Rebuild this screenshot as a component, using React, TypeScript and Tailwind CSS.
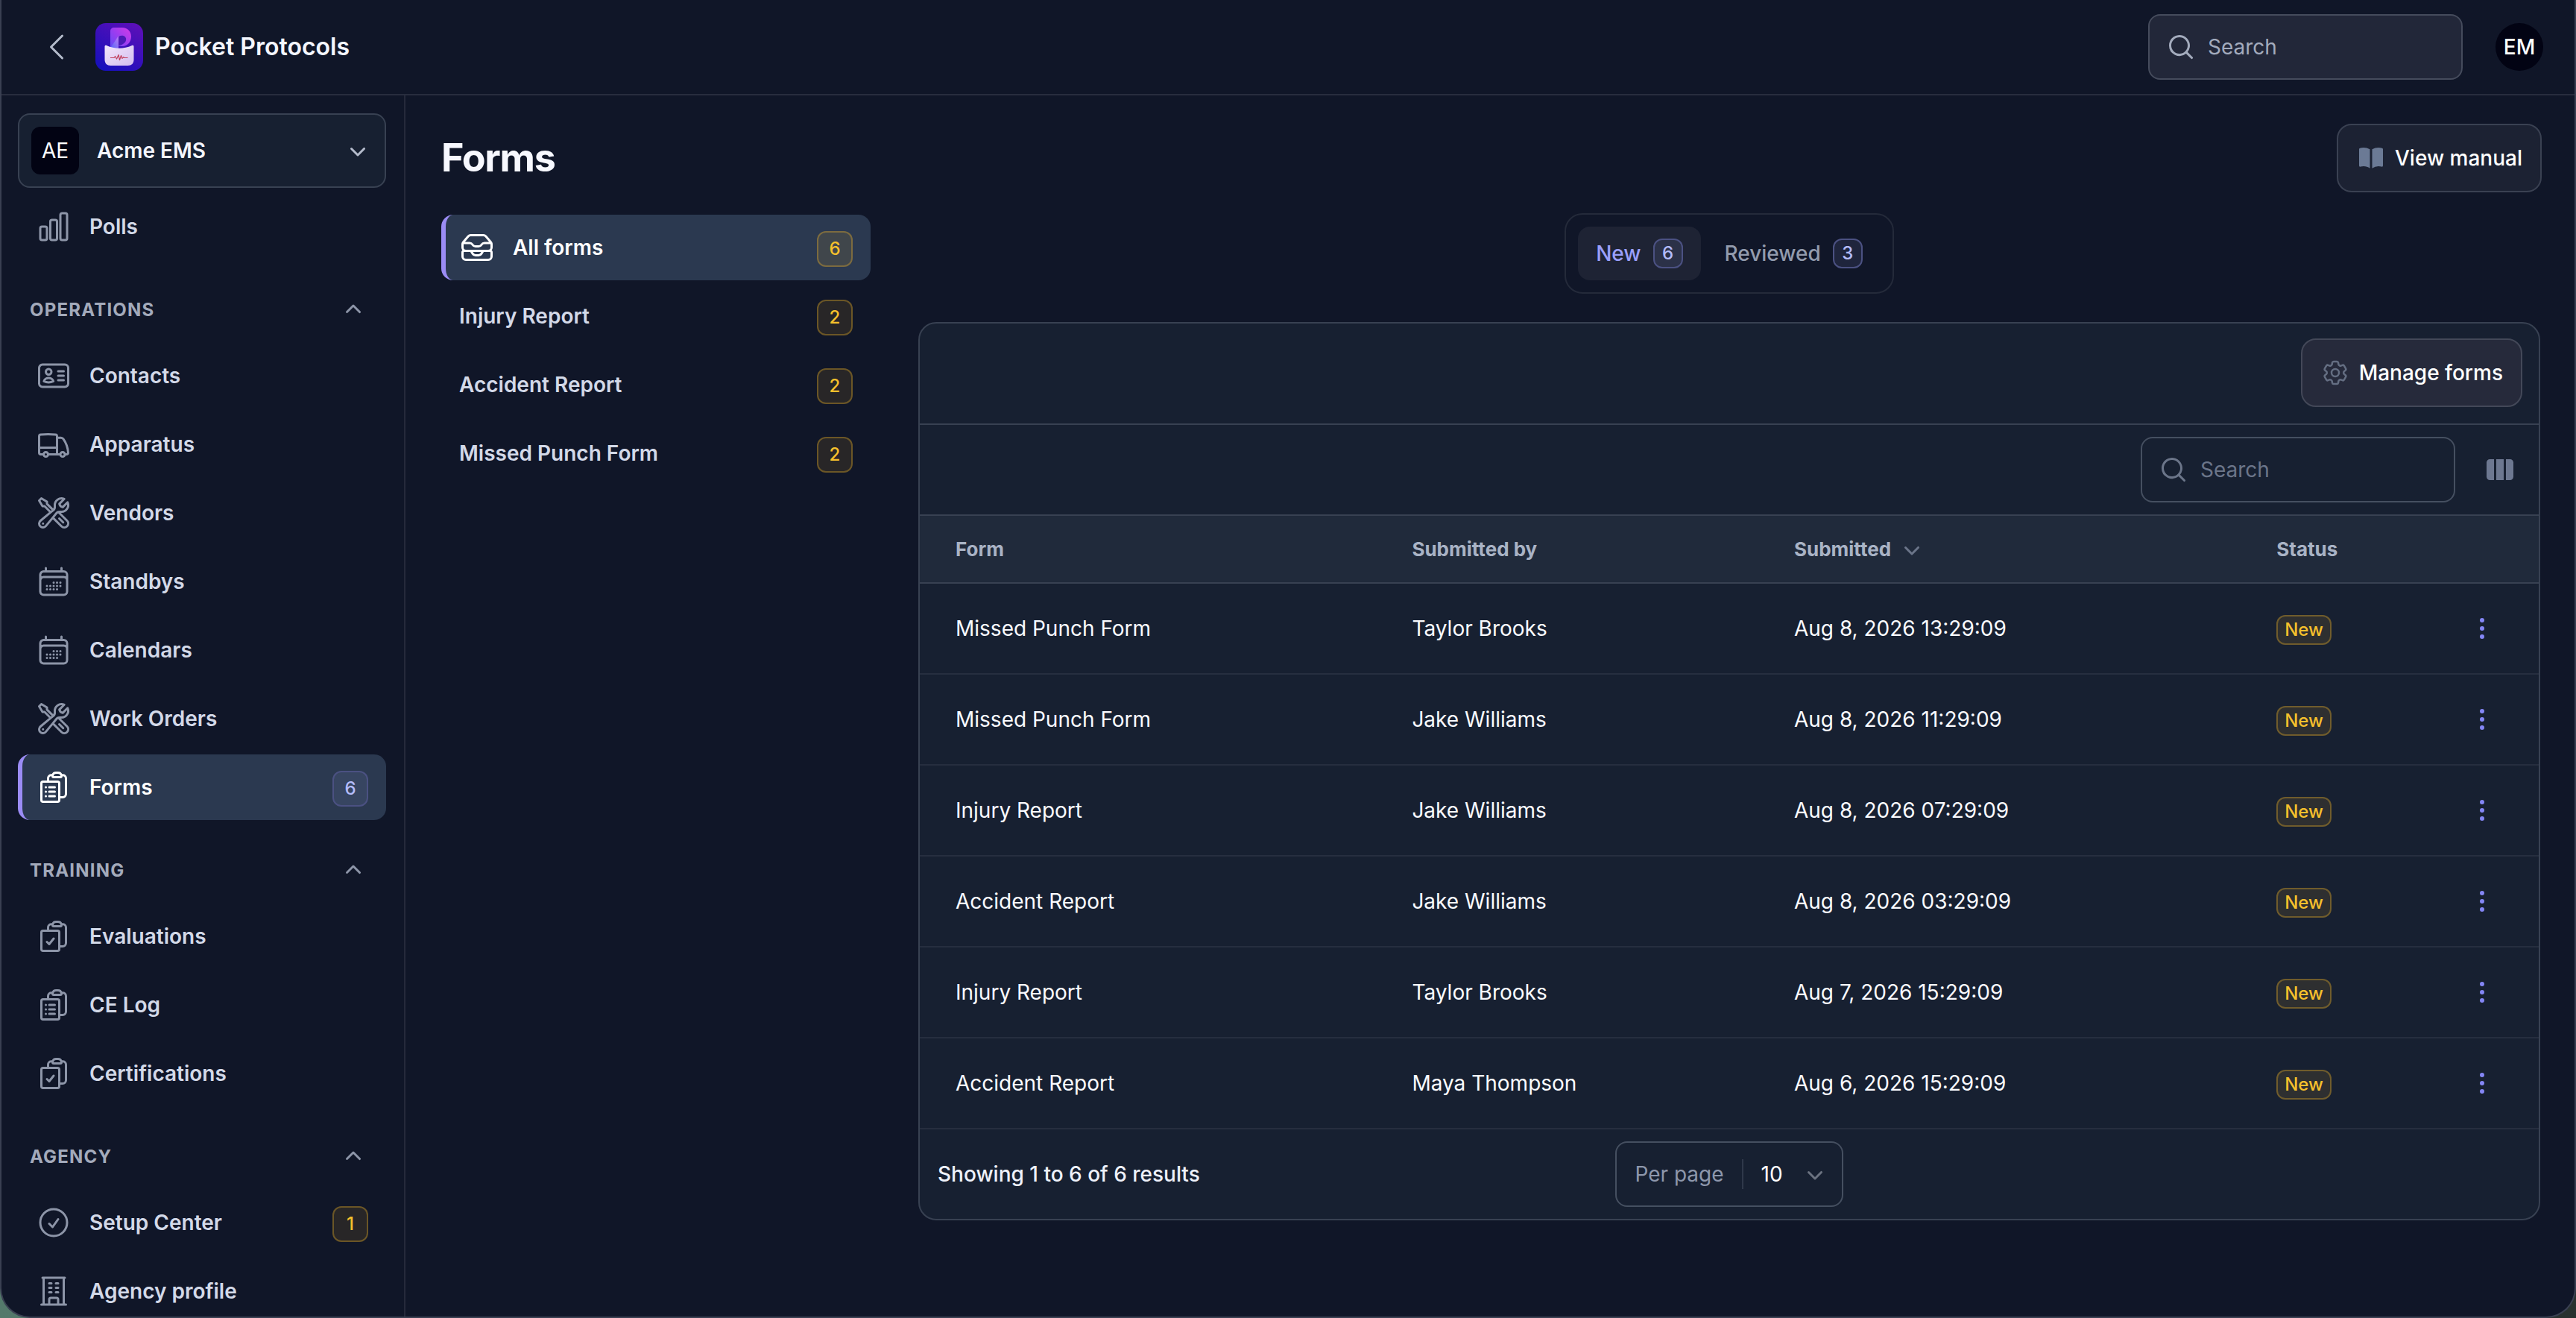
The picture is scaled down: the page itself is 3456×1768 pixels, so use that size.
import React, { useState } from "react";
import type { IconType } from "react-icons";
import {
  HiMiniBookOpen,
  HiMiniChevronDown,
  HiMiniChevronUp,
  HiMiniEllipsisVertical,
  HiMiniMagnifyingGlass,
  HiMiniViewColumns,
  HiOutlineBuildingOffice,
  HiOutlineCalendarDays,
  HiOutlineChartBar,
  HiOutlineCheckCircle,
  HiOutlineChevronLeft,
  HiOutlineClipboardDocumentCheck,
  HiOutlineClipboardDocumentList,
  HiOutlineCog6Tooth,
  HiOutlineIdentification,
  HiOutlineInboxStack,
  HiOutlineTruck,
  HiOutlineWrenchScrewdriver,
} from "react-icons/hi2";

type NavEntry = {
  label: string;
  icon: IconType;
  badge?: number;
  badgeTone?: "primary" | "warning";
  active?: boolean;
};

const navGroups: { title: string; items: NavEntry[] }[] = [
  {
    title: "OPERATIONS",
    items: [
      { label: "Contacts", icon: HiOutlineIdentification },
      { label: "Apparatus", icon: HiOutlineTruck },
      { label: "Vendors", icon: HiOutlineWrenchScrewdriver },
      { label: "Standbys", icon: HiOutlineCalendarDays },
      { label: "Calendars", icon: HiOutlineCalendarDays },
      { label: "Work Orders", icon: HiOutlineWrenchScrewdriver },
      {
        label: "Forms",
        icon: HiOutlineClipboardDocumentList,
        badge: 6,
        badgeTone: "primary",
        active: true,
      },
    ],
  },
  {
    title: "TRAINING",
    items: [
      { label: "Evaluations", icon: HiOutlineClipboardDocumentCheck },
      { label: "CE Log", icon: HiOutlineClipboardDocumentList },
      { label: "Certifications", icon: HiOutlineClipboardDocumentCheck },
    ],
  },
  {
    title: "AGENCY",
    items: [
      {
        label: "Setup Center",
        icon: HiOutlineCheckCircle,
        badge: 1,
        badgeTone: "warning",
      },
      { label: "Agency profile", icon: HiOutlineBuildingOffice },
    ],
  },
];

const formFilters = [
  { label: "All forms", count: 6, icon: HiOutlineInboxStack },
  { label: "Injury Report", count: 2 },
  { label: "Accident Report", count: 2 },
  { label: "Missed Punch Form", count: 2 },
];

const submissions = [
  { form: "Missed Punch Form", by: "Taylor Brooks", at: "Aug 8, 2026 13:29:09" },
  { form: "Missed Punch Form", by: "Jake Williams", at: "Aug 8, 2026 11:29:09" },
  { form: "Injury Report", by: "Jake Williams", at: "Aug 8, 2026 07:29:09" },
  { form: "Accident Report", by: "Jake Williams", at: "Aug 8, 2026 03:29:09" },
  { form: "Injury Report", by: "Taylor Brooks", at: "Aug 7, 2026 15:29:09" },
  { form: "Accident Report", by: "Maya Thompson", at: "Aug 6, 2026 15:29:09" },
];

const badgeTones = {
  primary: "border-[#4b5182] bg-[#a5b4fc]/10 text-[#b4bcfb]",
  warning: "border-[#fbbf24]/32 bg-[#fbbf24]/10 text-[#f5c02c]",
};

const CountBadge = ({
  tone,
  children,
}: {
  tone: "primary" | "warning";
  children: React.ReactNode;
}) => (
  <span
    className={`mt-1 flex size-12 shrink-0 items-center justify-center rounded-xl border-2 text-2xl font-medium ${badgeTones[tone]}`}
  >
    {children}
  </span>
);

const Logo = () => (
  <svg className="size-16 shrink-0" viewBox="0 0 64 64" aria-hidden="true">
    <defs>
      <linearGradient id="logoBg" x1="0.8" y1="0" x2="0.2" y2="1">
        <stop offset="0" stopColor="#5b0fb8" />
        <stop offset="1" stopColor="#1710bc" />
      </linearGradient>
      <linearGradient id="logoBowl" x1="1" y1="0" x2="0" y2="1">
        <stop offset="0" stopColor="#d43be6" />
        <stop offset="0.5" stopColor="#9a3df0" />
        <stop offset="1" stopColor="#5b4df5" />
      </linearGradient>
      <linearGradient id="logoStem" x1="0" y1="1" x2="1" y2="0">
        <stop offset="0" stopColor="#4a63f7" />
        <stop offset="1" stopColor="#c07bf5" />
      </linearGradient>
      <linearGradient id="logoPocket" x1="0" y1="0" x2="1" y2="1">
        <stop offset="0" stopColor="#f3e6fb" />
        <stop offset="1" stopColor="#d3bdee" />
      </linearGradient>
    </defs>
    <rect width="64" height="64" rx="14" fill="url(#logoBg)" />
    <path
      d="M20 11c0-3 2-5 5-5h11c7 0 12 5 12 12s-5 13-12 13h-6v5H20z"
      fill="url(#logoBowl)"
    />
    <path d="M31 18c6-3 11 0 10 5-1 4-5 6-11 8z" fill="#4a1bb5" />
    <path d="M31 17v18H19z" fill="url(#logoStem)" />
    <path
      d="M12.500 31.500c0-1.500 1-2 2.500-1.500 11 5 23 5 34 0 1.500-.5 2.500 0 2.500 1.500V49c0 5-3 8-8 8h-23c-5 0-8-3-8-8z"
      fill="url(#logoPocket)"
    />
    <path
      d="M20 46.500h5l1.500-2 2 3.500 1-2 1.500-3.500 1.500 7 2-6 1.500 4 1.500-2 1 1h5"
      fill="none"
      stroke="#c2405c"
      strokeWidth="1.200"
      strokeLinejoin="round"
    />
  </svg>
);

const SearchBox = ({ id, filled }: { id: string; filled?: boolean }) => (
  <label
    htmlFor={id}
    className={`flex h-22 w-[422px] items-center gap-4 rounded-2xl border-2 px-[22px] ${
      filled
        ? "border-[#454b5c] bg-[#222739] text-[#a3abbd]"
        : "border-[#454f60] text-[#6b7589]"
    }`}
  >
    <HiMiniMagnifyingGlass className="size-10 shrink-0" />
    <input
      id={id}
      type="search"
      aria-label="Search"
      placeholder="Search"
      className={`w-full min-w-0 bg-transparent text-[28px] leading-10 outline-none ${
        filled ? "placeholder:text-[#a3abbd]" : "placeholder:text-[#6b7589]"
      }`}
    />
  </label>
);

const NavItem = ({ item }: { item: NavEntry }) => {
  const Icon = item.icon;
  return (
    <li>
      <a
        href="#"
        aria-current={item.active ? "page" : undefined}
        className={`flex h-22 items-center gap-6 rounded-2xl border-l-6 pr-6 pl-[18px] text-[28px] font-semibold ${
          item.active
            ? "border-[#9b8cf5] bg-[#2b3950] text-white"
            : "border-transparent text-[#d3d9e8]"
        }`}
      >
        <Icon
          className={`size-12 shrink-0 ${
            item.active ? "text-white" : "text-[#8d95a8]"
          }`}
        />
        <span className="flex-1">{item.label}</span>
        {item.badge && (
          <CountBadge tone={item.badgeTone ?? "primary"}>{item.badge}</CountBadge>
        )}
      </a>
    </li>
  );
};

const Header = () => (
  <header className="flex h-32 shrink-0 items-center border-b-2 border-[#282d3e] pr-[42px] pl-[50px]">
    <button type="button" aria-label="Back" className="text-[#b4bbcb]">
      <HiOutlineChevronLeft className="size-12" />
    </button>
    <a href="#" className="ml-7 flex items-center gap-4">
      <Logo />
      <span className="text-[32px] font-semibold text-[#f4f6ff]">
        Pocket Protocols
      </span>
    </a>
    <div className="ml-auto flex items-center gap-11">
      <SearchBox id="global-search" filled />
      <button
        type="button"
        className="flex size-16 items-center justify-center rounded-full bg-[#020313] text-[28px] font-medium text-white"
      >
        EM
      </button>
    </div>
  </header>
);

const Sidebar = () => (
  <aside className="w-[542px] shrink-0 overflow-hidden border-r-2 border-[#252a3b] pt-6 pr-6 pl-[22px]">
    <button
      type="button"
      className="flex h-25 w-full items-center rounded-2xl border-2 border-[#384152] bg-[#172031] px-4 text-left"
    >
      <span className="flex size-16 items-center justify-center rounded-xl bg-[#020313] text-[28px] text-white">
        AE
      </span>
      <span className="ml-6 flex-1 text-[28px] font-semibold text-[#f4f6ff]">
        Acme EMS
      </span>
      <HiMiniChevronDown className="size-10 text-[#b4bbcb]" />
    </button>
    <nav>
      <ul className="mt-2">
        <NavItem item={{ label: "Polls", icon: HiOutlineChartBar }} />
      </ul>
      {navGroups.map((group) => (
        <section key={group.title}>
          <button
            type="button"
            className="mt-12 mb-6 flex h-10 w-full items-center justify-between pr-6 pl-4 text-2xl font-bold tracking-wider text-[#a3aabb]"
          >
            {group.title}
            <HiMiniChevronUp className="size-10 text-[#8d95a8]" />
          </button>
          <ul className="flex flex-col gap-1">
            {group.items.map((item) => (
              <NavItem key={item.label} item={item} />
            ))}
          </ul>
        </section>
      ))}
    </nav>
  </aside>
);

const FormFilterList = () => (
  <ul className="flex w-[576px] shrink-0 flex-col gap-1">
    {formFilters.map(({ label, count, icon: Icon }, index) => (
      <li key={label}>
        <a
          href="#"
          className={`flex h-22 items-center gap-6 rounded-2xl border-l-6 pr-6 pl-[18px] text-[28px] font-semibold ${
            index === 0
              ? "border-[#9b8cf5] bg-[#2b3950] text-white"
              : "border-transparent text-[#d3d9e8]"
          }`}
        >
          {Icon && <Icon className="size-12 shrink-0" />}
          <span className="flex-1">{label}</span>
          <CountBadge tone="warning">{count}</CountBadge>
        </a>
      </li>
    ))}
  </ul>
);

const StatusTabs = () => {
  const [selected, setSelected] = useState("New");
  const tabs = [
    { label: "New", count: 6 },
    { label: "Reviewed", count: 3 },
  ];
  return (
    <div
      role="tablist"
      className="flex gap-2 self-center rounded-3xl border-2 border-[#242a3a] p-4"
    >
      {tabs.map((tab) => (
        <button
          key={tab.label}
          type="button"
          role="tab"
          aria-selected={selected === tab.label}
          onClick={() => setSelected(tab.label)}
          className={`flex h-18 items-center gap-4 rounded-2xl px-6 text-[28px] font-medium ${
            selected === tab.label
              ? "bg-[#1e2334] text-[#9a9ffb]"
              : "text-[#929bad]"
          }`}
        >
          {tab.label}
          <span
            className={`flex size-10 items-center justify-center rounded-xl border-2 text-2xl ${badgeTones.primary}`}
          >
            {tab.count}
          </span>
        </button>
      ))}
    </div>
  );
};

const SubmissionsTable = () => (
  <table className="w-full table-fixed text-left text-[28px] text-[#fafbff]">
    <colgroup>
      <col className="w-[29.3%]" />
      <col className="w-[23.6%]" />
      <col className="w-[29.8%]" />
      <col />
      <col className="w-[124px]" />
    </colgroup>
    <thead>
      <tr className="h-[90px] border-b-2 border-[#384152] bg-[#202a3b] text-[26px] text-[#a9b3c5]">
        <th className="pr-6 pl-12 font-bold">Form</th>
        <th className="px-6 font-bold">Submitted by</th>
        <th className="px-6 font-bold" aria-sort="descending">
          <button type="button" className="flex items-center gap-2">
            Submitted
            <HiMiniChevronDown className="size-10 text-[#6b7589]" />
          </button>
        </th>
        <th className="px-6 font-bold">Status</th>
        <th aria-label="Actions" />
      </tr>
    </thead>
    <tbody>
      {submissions.map((row) => (
        <tr key={row.at} className="h-[122px] border-b-2 border-[#262e3f]">
          <td className="pr-6 pl-12">{row.form}</td>
          <td className="px-6">{row.by}</td>
          <td className="px-6">{row.at}</td>
          <td className="px-6">
            <span
              className={`inline-flex h-10 items-center rounded-xl border-2 px-[9px] align-middle text-2xl font-medium ${badgeTones.warning}`}
            >
              New
            </span>
          </td>
          <td className="pr-14">
            <button
              type="button"
              aria-label="Row actions"
              className="ml-auto block text-[#8486f5]"
            >
              <HiMiniEllipsisVertical className="size-10" />
            </button>
          </td>
        </tr>
      ))}
    </tbody>
  </table>
);

const Pagination = () => (
  <div className="grid h-30 grid-cols-3 items-center px-6">
    <p className="text-[28px] font-medium text-[#eef1fa]">
      Showing 1 to 6 of 6 results
    </p>
    <div className="flex h-22 items-center justify-self-center rounded-2xl border-2 border-[#454f60] text-[28px]">
      <label htmlFor="per-page" className="px-6 text-[#8d97ac]">
        Per page
      </label>
      <div className="relative flex h-10 items-center border-l-2 border-[#2f384a]">
        <select
          id="per-page"
          defaultValue="10"
          className="w-[132px] appearance-none bg-transparent pl-6 leading-10 text-white outline-none"
        >
          <option>10</option>
          <option>25</option>
          <option>50</option>
        </select>
        <HiMiniChevronDown className="pointer-events-none absolute right-4 size-10 text-[#6b7280]" />
      </div>
    </div>
  </div>
);

const App = () => {
  return (
    <div className="h-screen overflow-hidden bg-linear-to-r from-[#54796b] to-[#28312f] font-['Inter',sans-serif]">
      <div className="flex h-full flex-col overflow-hidden rounded-b-[40px] border-x-2 border-b-2 border-[#3a4052] bg-[#101628]">
        <Header />
        <div className="flex min-h-0 flex-1">
          <Sidebar />
          <main className="min-w-0 flex-1 pt-[38px] pr-11 pl-12">
            <div className="flex items-center justify-between">
              <h1 className="text-[52px] font-bold tracking-tight text-[#f7f8ff]">
                Forms
              </h1>
              <button
                type="button"
                className="flex h-23 items-center gap-3 rounded-[20px] border-2 border-[#3a4152] bg-[#1c2233] px-6 text-[28px] font-medium text-white"
              >
                <HiMiniBookOpen className="size-10 text-[#6b7a95]" />
                View manual
              </button>
            </div>
            <div className="mt-7 flex gap-16 pr-[2px]">
              <div className="pt-[2px]">
                <FormFilterList />
              </div>
              <div className="flex min-w-0 flex-1 flex-col">
                <StatusTabs />
                <section className="mt-[38px] overflow-hidden rounded-3xl border-2 border-[#384152] bg-[#172031]">
                  <div className="flex h-34 items-start justify-end border-b-2 border-[#384152] px-[22px] pt-5">
                    <button
                      type="button"
                      className="flex h-23 items-center gap-3 rounded-[20px] border-2 border-[#434858] bg-[#262a3b] px-6 text-[28px] font-medium text-white"
                    >
                      <HiOutlineCog6Tooth className="size-10 text-[#646e82]" />
                      Manage forms
                    </button>
                  </div>
                  <div className="flex h-[122px] items-center justify-end gap-10 border-b-2 border-[#384152] pr-8">
                    <SearchBox id="table-search" />
                    <button
                      type="button"
                      aria-label="Toggle columns"
                      className="text-[#6d7891]"
                    >
                      <HiMiniViewColumns className="size-10" />
                    </button>
                  </div>
                  <SubmissionsTable />
                  <Pagination />
                </section>
              </div>
            </div>
          </main>
        </div>
      </div>
    </div>
  );
};

export default App;
